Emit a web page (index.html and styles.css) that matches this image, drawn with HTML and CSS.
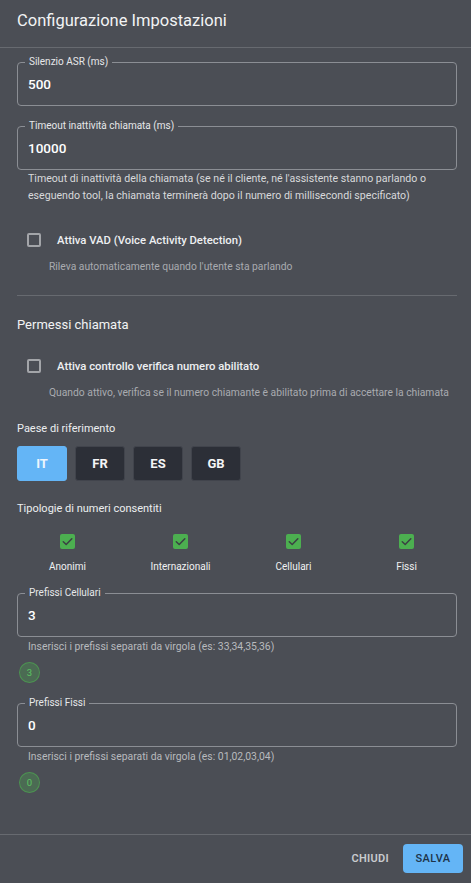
FILE: index.html
```html
<!DOCTYPE html>
<html lang="it">
<head>
<meta charset="utf-8">
<title>Configurazione Impostazioni</title>
<link rel="stylesheet" href="styles.css">
</head>
<body>
<div class="dialog">
  <div class="header">
    <h1 class="title">Configurazione Impostazioni</h1>
  </div>
  <div class="content">
    <div class="field field-first">
      <span class="field-label">Silenzio ASR (ms)</span>
      <span class="field-value">500</span>
    </div>
    <div class="field field-second">
      <span class="field-label">Timeout inattività chiamata (ms)</span>
      <span class="field-value">10000</span>
    </div>
    <p class="hint">Timeout di inattività della chiamata (se né il cliente, né l'assistente stanno parlando o eseguendo tool, la chiamata terminerà dopo il numero di millisecondi specificato)</p>

    <div class="check-row check-vad">
      <span class="box"></span>
      <span class="check-label">Attiva VAD (Voice Activity Detection)</span>
    </div>
    <p class="sub">Rileva automaticamente quando l'utente sta parlando</p>

    <hr class="divider">

    <h2 class="section">Permessi chiamata</h2>
    <div class="check-row check-perm">
      <span class="box"></span>
      <span class="check-label">Attiva controllo verifica numero abilitato</span>
    </div>
    <p class="sub">Quando attivo, verifica se il numero chiamante è abilitato prima di accettare la chiamata</p>

    <div class="small-title paese">Paese di riferimento</div>
    <div class="countries">
      <button class="country active">IT</button>
      <button class="country">FR</button>
      <button class="country">ES</button>
      <button class="country">GB</button>
    </div>

    <div class="small-title tipologie">Tipologie di numeri consentiti</div>
    <div class="types">
      <div class="type">
        <span class="gbox"><svg viewBox="0 0 16 16" width="15" height="15"><path d="M3.5 8.2 L6.6 11.2 L12.6 5" fill="none" stroke="#3b4043" stroke-width="1.6" stroke-linecap="round" stroke-linejoin="round"/></svg></span>
        <span class="type-label">Anonimi</span>
      </div>
      <div class="type">
        <span class="gbox"><svg viewBox="0 0 16 16" width="15" height="15"><path d="M3.5 8.2 L6.6 11.2 L12.6 5" fill="none" stroke="#3b4043" stroke-width="1.6" stroke-linecap="round" stroke-linejoin="round"/></svg></span>
        <span class="type-label">Internazionali</span>
      </div>
      <div class="type">
        <span class="gbox"><svg viewBox="0 0 16 16" width="15" height="15"><path d="M3.5 8.2 L6.6 11.2 L12.6 5" fill="none" stroke="#3b4043" stroke-width="1.6" stroke-linecap="round" stroke-linejoin="round"/></svg></span>
        <span class="type-label">Cellulari</span>
      </div>
      <div class="type">
        <span class="gbox"><svg viewBox="0 0 16 16" width="15" height="15"><path d="M3.5 8.2 L6.6 11.2 L12.6 5" fill="none" stroke="#3b4043" stroke-width="1.6" stroke-linecap="round" stroke-linejoin="round"/></svg></span>
        <span class="type-label">Fissi</span>
      </div>
    </div>

    <div class="field field-cell">
      <span class="field-label">Prefissi Cellulari</span>
      <span class="field-value">3</span>
    </div>
    <p class="hint2">Inserisci i prefissi separati da virgola (es: 33,34,35,36)</p>
    <div class="chip">3</div>

    <div class="field field-fix">
      <span class="field-label">Prefissi Fissi</span>
      <span class="field-value">0</span>
    </div>
    <p class="hint2">Inserisci i prefissi separati da virgola (es: 01,02,03,04)</p>
    <div class="chip">0</div>
  </div>
  <div class="footer">
    <button class="btn-text">CHIUDI</button>
    <button class="btn-primary">SALVA</button>
  </div>
</div>
</body>
</html>
```

FILE: styles.css
```css
* { box-sizing: border-box; }
html, body {
  margin: 0;
  padding: 0;
  background: #4b4e55;
}
body {
  font-family: Roboto, "Noto Sans", "Liberation Sans", sans-serif;
  color: #eceef0;
}
.dialog {
  height: 883px;
  display: flex;
  flex-direction: column;
  overflow: hidden;
}
.header {
  height: 48px;
  border-bottom: 1px solid #676a70;
  padding: 10px 17px 0;
  flex: none;
}
.title {
  margin: 0;
  font-size: 16.5px;
  line-height: 22px;
  font-weight: 400;
  color: #f2f3f4;
}
.content {
  flex: 1;
  overflow: hidden;
  padding: 0 14px 0 17px;
  display: flex;
  flex-direction: column;
  align-items: stretch;
}
.field {
  position: relative;
  height: 44px;
  border: 1px solid #8b8e94;
  border-radius: 4px;
  display: flex;
  align-items: center;
  padding-left: 10px;
  flex: none;
}
.field-label {
  position: absolute;
  top: -7px;
  left: 7px;
  padding: 0 4px;
  background: #4b4e55;
  font-size: 10px;
  line-height: 12px;
  color: #e6e7e9;
}
.field-value {
  font-size: 13.5px;
  font-weight: 500;
  color: #ffffff;
}
.field-first { margin-top: 14px; }
.field-second { margin-top: 20px; }
.hint {
  margin: 1px 0 0;
  padding-left: 11px;
  font-size: 10.6px;
  line-height: 16.5px;
  color: #d8d9db;
}
.check-row {
  display: flex;
  align-items: center;
  height: 24px;
  padding-left: 10px;
}
.check-vad { margin-top: 24px; }
.check-perm { margin-top: 19px; }
.box {
  width: 14px;
  height: 14px;
  border: 2px solid #a3a5a9;
  border-radius: 2px;
  flex: none;
}
.check-label {
  margin-left: 16px;
  font-size: 11.3px;
  font-weight: 500;
  color: #eef0f2;
}
.sub {
  margin: 8px 0 0;
  padding-left: 32px;
  font-size: 10.3px;
  line-height: 14px;
  color: #a9abb0;
}
.divider {
  margin: 21px 0 0;
  border: 0;
  border-top: 1px solid #676a70;
  height: 0;
}
.section {
  margin: 19px 0 0;
  font-size: 13px;
  line-height: 20px;
  font-weight: 400;
  color: #f2f3f4;
}
.small-title {
  font-size: 11px;
  line-height: 16px;
  color: #eceef0;
}
.paese { margin-top: 21px; }
.countries {
  display: flex;
  gap: 8px;
  margin-top: 9px;
}
.country {
  width: 50px;
  height: 35px;
  border-radius: 3px;
  border: 1px solid #41444c;
  background: #2c2f37;
  color: #f4f5f6;
  font-family: inherit;
  font-size: 13px;
  font-weight: 700;
  padding: 0;
}
.country.active {
  background: #64b5f6;
  border-color: #64b5f6;
  color: #eef6fd;
}
.tipologie { margin-top: 20px; }
.types {
  display: grid;
  grid-template-columns: repeat(4, 1fr);
  margin: 17px -6px 0 -6px;
}
.type {
  display: flex;
  flex-direction: column;
  align-items: center;
}
.gbox {
  width: 15px;
  height: 15px;
  background: #4caf50;
  border-radius: 2px;
  display: block;
}
.gbox svg { display: block; }
.type-label {
  margin-top: 11px;
  font-size: 10px;
  line-height: 14px;
  color: #f0f1f2;
}
.field-cell { margin-top: 19px; }
.field-fix { margin-top: 20px; }
.hint2 {
  margin: 3px 0 0;
  padding-left: 11px;
  font-size: 10.4px;
  line-height: 14px;
  color: #b8babe;
}
.chip {
  margin: 8px 0 0 2px;
  width: 21px;
  height: 21px;
  border-radius: 50%;
  background: rgba(76, 175, 80, 0.3);
  border: 1px solid rgba(76, 175, 80, 0.6);
  color: #5cc462;
  font-size: 9.5px;
  display: flex;
  align-items: center;
  justify-content: center;
  flex: none;
}
.footer {
  flex: none;
  height: 49px;
  border-top: 1px solid #676a70;
  display: flex;
  justify-content: flex-end;
  align-items: center;
  padding: 0 8px 2px 0;
  gap: 6px;
}
.btn-text {
  background: none;
  border: 0;
  padding: 0 8px;
  height: 29px;
  font-family: inherit;
  font-size: 11px;
  font-weight: 600;
  letter-spacing: 0.3px;
  color: #c9cbcf;
}
.btn-primary {
  width: 60px;
  height: 29px;
  border: 0;
  border-radius: 4px;
  background: #64b5f6;
  color: #1d3349;
  font-family: inherit;
  font-size: 11px;
  font-weight: 500;
  letter-spacing: 0.4px;
  padding: 0;
}
```
